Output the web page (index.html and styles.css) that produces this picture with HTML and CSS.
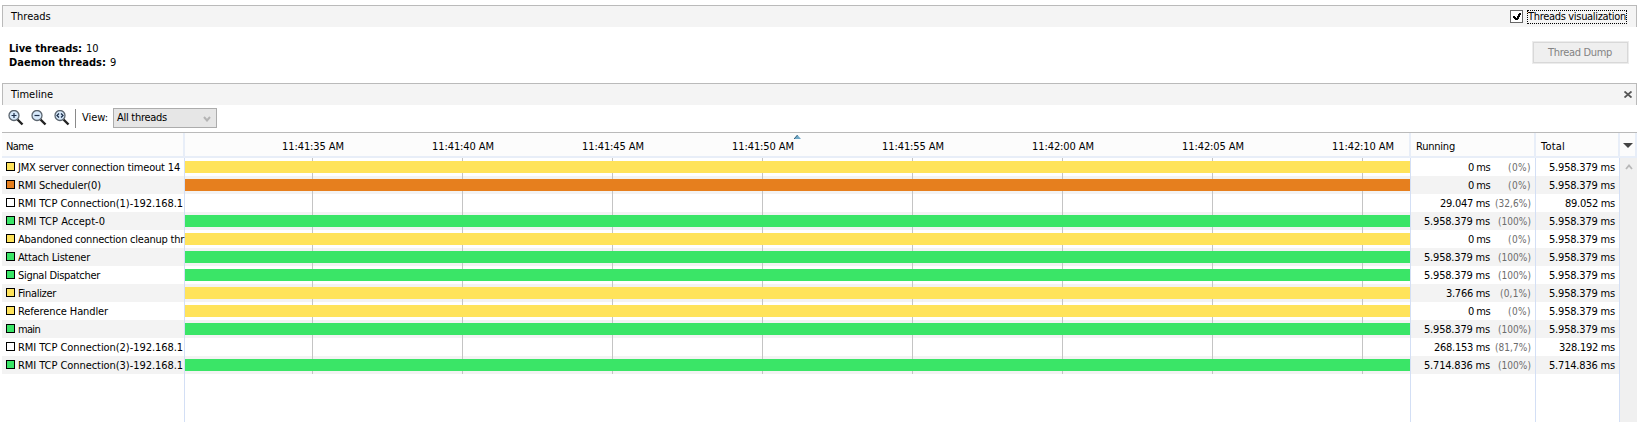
FILE: index.html
```
<!DOCTYPE html>
<html lang="en">
<head>
<meta charset="utf-8">
<title>Threads</title>
<link rel="stylesheet" href="styles.css">
</head>
<body>
<main class="panel">
  <header class="bar">
    <h2 class="title">Threads</h2>
    <label class="check"><svg class="box" width="13" height="13" viewBox="0 0 13 13" shape-rendering="crispEdges"><rect x=".5" y=".5" width="12" height="12" fill="#fff" stroke="#666"/><path d="M3 6h2v1h1v1h1V6h1V4h1V3h2v2h-1v2H9v2H8v1H5V9H4V8H3z" fill="#000"/></svg><span class="focus"><span class="t" data-w="98">Threads visualization</span></span></label>
  </header>
  <section class="summary">
    <div class="counts">
      <div><b class="t" data-w="73">Live threads:</b><span class="t num">10</span></div>
      <div><b class="t" data-w="97">Daemon threads:</b><span class="t num">9</span></div>
    </div>
    <button class="dump" disabled><span class="t" data-w="64">Thread Dump</span></button>
  </section>
  <header class="bar">
    <h2 class="title">Timeline</h2>
    <svg class="close" width="8" height="7" viewBox="0 0 8 7"><path d="M.5 .5l7 6M7.500 .5l-7 6" stroke="#555" stroke-width="1.8"/></svg>
  </header>
  <div class="tools">
    <svg class="zoom" width="16" height="16" viewBox="0 0 16 16"><path d="M9.500 9.500l5 5" stroke="#222" stroke-width="2.4"/><circle cx="6" cy="5.500" r="5" fill="#d7e9fb" stroke="#5c6670" stroke-width="1.3"/><path d="M3.500 5.500h5M6 3v5" stroke="#1d2f4a" stroke-width="1.2"/></svg>
    <svg class="zoom" width="16" height="16" viewBox="0 0 16 16"><path d="M9.500 9.500l5 5" stroke="#222" stroke-width="2.4"/><circle cx="6" cy="5.500" r="5" fill="#d7e9fb" stroke="#5c6670" stroke-width="1.3"/><path d="M3.500 5.500h5" stroke="#1d2f4a" stroke-width="1.2"/></svg>
    <svg class="zoom" width="16" height="16" viewBox="0 0 16 16"><path d="M9.500 9.500l5 5" stroke="#222" stroke-width="2.4"/><circle cx="6" cy="5.500" r="5" fill="#d7e9fb" stroke="#5c6670" stroke-width="1.3"/><path d="M5 3.500l-2 2 2 2M7 3.500l2 2-2 2" fill="none" stroke="#1d2f4a" stroke-width="1.3"/></svg>
    <i class="sep"></i>
    <span class="view t" data-w="25">View:</span>
    <div class="select"><span class="t" data-w="50">All threads</span><svg width="8" height="7" viewBox="0 0 8 7"><path d="M1 2l3 3.500 3-3.500" fill="none" stroke="#b4b4b4" stroke-width="2"/></svg></div>
  </div>
  <section class="table">
    <div class="head">
      <div class="h"><span class="t" data-w="27">Name</span></div>
      <div class="h times" id="times"><svg class="sort" width="7" height="4" viewBox="0 0 7 4"><path d="M0 4L3.5 0 7 4z" fill="#6fa9c8"/><path d="M0 4L3.5 0" stroke="#2f5d78"/></svg></div>
      <div class="h num-head"><span class="t" data-w="39">Running</span></div>
      <div class="h num-head"><span class="t" data-w="24">Total</span></div>
      <div class="h menu"><svg width="10" height="5" viewBox="0 0 10 5"><path d="M0 0h10L5 5z" fill="#444"/></svg></div>
    </div>
    <div class="content">
      <div class="rows" id="rows"></div>
      <div class="scroll"><svg width="8" height="6" viewBox="0 0 8 6"><path d="M1 5l3-3.5L7 5" fill="none" stroke="#b8b8b8" stroke-width="1.8"/></svg></div>
    </div>
  </section>
</main>
<script src="app.js"></script>
</body>
</html>
```
FILE: styles.css
```
* { box-sizing: border-box; }
body { margin: 0; background: #fff; color: #000; font: 11px/14px "DejaVu Sans Condensed", "DejaVu Sans", sans-serif; font-stretch: condensed; overflow: hidden; }
.panel { height: 422px; padding: 5px 4px 0 2px; display: flex; flex-direction: column; }
.t { display: inline-block; white-space: pre; }
.bar { height: 22px; flex: none; display: flex; align-items: center; justify-content: space-between; background: #f4f4f4; border: 1px solid #bababa; border-bottom: 0; padding: 0 4px 0 8px; }
.title { margin: 0; font: inherit; }
.check { display: flex; align-items: center; gap: 4px; padding-right: 5px; }
.focus { height: 14px; width: 100px; border: 1px dotted #000; line-height: 11px; white-space: nowrap; }
.summary { height: 56px; flex: none; display: flex; justify-content: space-between; padding: 14px 8px 0 7px; }
.counts { padding-top: 1px; }
.counts b { font-weight: bold; }
.num { margin-left: 4px; }
.dump { width: 97px; height: 23px; border: 1px solid #ececec; outline: 0; box-shadow: inset 0 0 0 1px #d8d8d8; background: #efefef; color: #838383; font: inherit; padding: 0; }
.dump .t { margin-right: 1px; }
.close { display: block; }
.tools { height: 27px; flex: none; display: flex; align-items: center; padding: 0 0 1px 6px; }
.zoom { margin-right: 7px; flex: none; }
.sep { width: 1px; height: 19px; background: #8a8a8a; margin: 0 6px 0 -2px; }
.view { margin-right: 6px; width: 25px; }
.select { width: 104px; height: 20px; background: #e6e6e6; border: 1px solid #acacac; display: flex; justify-content: space-between; align-items: center; padding: 0 5px 0 3px; }
.table { flex: 1; display: flex; flex-direction: column; border-top: 1px solid #bababa; }
.head { height: 25px; flex: none; display: grid; grid-template-columns: 183px 1226px 125px 84px 17px; background: #fcfcfc; border-bottom: 2px solid #e8eef8; }
.h { display: flex; align-items: center; padding: 4px 0 0 4px; border-right: 2px solid #e8eef8; }
.num-head { padding-left: 5px; }
.times { padding: 4px 0 0 53px; position: relative; }
.time { width: 150px; flex: none; text-align: center; }
.sort { position: absolute; left: 609px; top: 2px; }
.menu { padding: 2px 0 0 3px; }
.content { flex: 1; display: flex; }
.rows { flex: none; width: 1618px; display: grid; grid-template-rows: repeat(12, 18px) 1fr; }
.row { display: grid; grid-template-columns: 183px 1226px 125px 84px; }
.row:nth-child(even) { background: #f3f3f3; }
.row > div { border-right: 1px solid #d3dff5; }
.row .t { padding-top: 2px; }
.name { display: flex; align-items: center; gap: 3px; padding-left: 4px; }
.swatch { width: 9px; height: 9px; border: 1px solid #000; flex: none; margin-bottom: 1px; }
.lane { display: flex; align-items: center; background: repeating-linear-gradient(90deg, transparent 0 127px, #c4c4c4 127px 128px, transparent 128px 150px); }
.row:last-child .lane { background: none; }
.fill { height: 12px; width: 100%; }
.yellow { background: #ffe35a; }
.orange { background: #e67f1e; }
.green { background: #3ae567; }
.white { background: #fff; }
.run { display: flex; align-items: center; justify-content: flex-end; padding-right: 4px; }
.pct { width: 41px; text-align: right; color: #6c6c6c; font-size: 10px; }
.total { display: flex; align-items: center; justify-content: flex-end; padding-right: 4px; }
.scroll { width: 17px; background: #f0f0f0; padding: 6px 0 0 5px; }
.scroll svg { display: block; }
```
FILE: app.js
```
const threads = [
  ["JMX server connection timeout 14", "yellow", "0", "0%", "5.958.379", 162],
  ["RMI Scheduler(0)", "orange", "0", "0%", "5.958.379", 83],
  ["RMI TCP Connection(1)-192.168.1", "white", "29.047", "32,6%", "89.052", 165],
  ["RMI TCP Accept-0", "green", "5.958.379", "100%", "5.958.379", 87],
  ["Abandoned connection cleanup thr", "yellow", "0", "0%", "5.958.379", 166],
  ["Attach Listener", "green", "5.958.379", "100%", "5.958.379", 72],
  ["Signal Dispatcher", "green", "5.958.379", "100%", "5.958.379", 82],
  ["Finalizer", "yellow", "3.766", "0,1%", "5.958.379", 38],
  ["Reference Handler", "yellow", "0", "0%", "5.958.379", 90],
  ["main", "green", "5.958.379", "100%", "5.958.379", 22],
  ["RMI TCP Connection(2)-192.168.1", "white", "268.153", "81,7%", "328.192", 165],
  ["RMI TCP Connection(3)-192.168.1", "green", "5.714.836", "100%", "5.714.836", 165]
];
const msWidth = { "0": 22, "3.766": 44, "29.047": 50, "89.052": 50, "268.153": 56, "328.192": 56 };
const pctWidth = { "0%": 23, "0,1%": 31, "32,6%": 36, "81,7%": 36, "100%": 33 };
const ms = v => `<span class="t" data-w="${msWidth[v] || 66}">${v} ms</span>`;
document.getElementById("rows").innerHTML = threads.map(([name, color, run, pct, total, w]) => `
  <div class="row">
    <div class="name"><i class="swatch ${color}"></i><span class="t" data-w="${w}">${name}</span></div>
    <div class="lane">${color === "white" ? "" : `<div class="fill ${color}"></div>`}</div>
    <div class="run">${ms(run)}<div class="pct"><span class="t" data-w="${pctWidth[pct]}">(${pct})</span></div></div>
    <div class="total">${ms(total)}</div>
  </div>`).join("") + `<div class="row"><div></div><div class="lane"></div><div></div><div></div></div>`;
document.getElementById("times").insertAdjacentHTML("beforeend",
  ["11:41:35", "11:41:40", "11:41:45", "11:41:50", "11:41:55", "11:42:00", "11:42:05", "11:42:10"]
    .map(t => `<div class="time"><span class="t" data-w="62">${t} AM</span></div>`).join(""));
document.querySelectorAll("[data-w]").forEach(el => {
  const extra = (el.dataset.w - el.getBoundingClientRect().width) / el.textContent.length;
  el.style.letterSpacing = extra + "px";
});
```
